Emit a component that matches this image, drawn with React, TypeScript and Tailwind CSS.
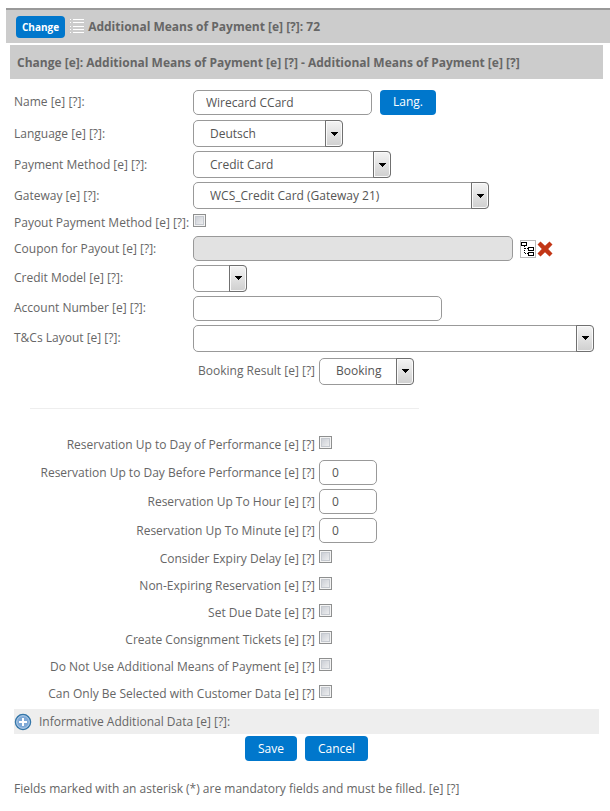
import type { ReactNode } from "react";

const box =
  "h-[25px] rounded-[5px] border border-[#999] bg-white px-3 text-[#555] outline-none";
const primary =
  "rounded-[4px] bg-[#0077cc] text-white hover:bg-[#0069b4]";

function Check({ id }: { id: string }) {
  return (
    <input
      id={id}
      type="checkbox"
      className="mb-1 size-[13px] shrink-0 appearance-none border border-[#8e8f8f] bg-linear-to-br from-[#c3c7cf] to-[#f6f6f6] shadow-[inset_0_0_0_1px_#f4f4f4,inset_0_0_0_2px_#c5c9cf] checked:from-[#0077cc]"
    />
  );
}

function Select({ id, value, width }: { id: string; value: string; width: string }) {
  return (
    <div className={`relative ${width}`}>
      <select
        id={id}
        defaultValue={value}
        className="block h-[27px] w-full appearance-none rounded-[5px] border border-[#999] bg-white pr-5 pl-4 text-[#555] outline-none"
      >
        <option value={value}>{value}</option>
      </select>
      <span
        aria-hidden="true"
        className="pointer-events-none absolute inset-y-0 right-0 flex w-[18px] items-center justify-center rounded-r-[4px] border border-[#707070] bg-linear-to-b from-[#f4f4f4] to-[#cfcfcf] shadow-[inset_0_0_0_1px_#fafafa]"
      >
        <svg width="7" height="4" viewBox="0 0 7 4" shapeRendering="crispEdges">
          <path d="M0 0h7v1H6v1H5v1H4v1H3V3H2V2H1V1H0z" fill="#000" />
        </svg>
      </span>
    </div>
  );
}

function Row({
  id,
  label,
  height = "h-[30px]",
  children,
}: {
  id: string;
  label: string;
  height?: string;
  children: ReactNode;
}) {
  return (
    <div className={`flex items-center ${height}`}>
      <label htmlFor={id} className="w-[179px] shrink-0 whitespace-nowrap">
        {label} [e] [?]:
      </label>
      {children}
    </div>
  );
}

function OptionRow({
  id,
  label,
  height = "h-[27px]",
  children,
}: {
  id: string;
  label: string;
  height?: string;
  children: ReactNode;
}) {
  return (
    <div className={`flex items-center gap-1 ${height}`}>
      <label htmlFor={id} className="w-[301px] shrink-0 text-right whitespace-nowrap">
        {label} [e] [?]
      </label>
      {children}
    </div>
  );
}

function ListIcon() {
  return (
    <svg width="14" height="15" viewBox="0 0 14 15" shapeRendering="crispEdges" aria-hidden="true">
      <path
        d="M0 0h1v1H0zM3 0h11v1H3zM0 3h1v1H0zM3 3h11v1H3zM0 7h1v1H0zM3 7h11v1H3zM0 10h1v1H0zM3 10h11v1H3zM0 13h1v1H0zM3 13h11v1H3z"
        fill="#fff"
      />
    </svg>
  );
}

function TreeIcon() {
  return (
    <svg width="16" height="18" viewBox="0 0 16 18" shapeRendering="crispEdges" aria-hidden="true">
      <rect x=".5" y=".5" width="15" height="17" fill="#fff" stroke="#bbb" />
      <g fill="none" stroke="#000">
        <rect x="1.5" y="2.5" width="5" height="3" />
        <rect x="8.5" y="7.5" width="5" height="3" />
        <rect x="8.5" y="12.5" width="5" height="3" />
        <path d="M4.5 6v8" strokeDasharray="1 1" />
        <path d="M5 8.5h3M5 13.5h3" strokeDasharray="1 1" />
      </g>
    </svg>
  );
}

function CrossIcon() {
  return (
    <svg width="16" height="16" viewBox="0 0 16 16" aria-hidden="true">
      <path
        d="M3.5 .5 8 4.8 12.5 .5 15.5 3.5 11.2 8 15.5 12.5 12.5 15.5 8 11.2 3.5 15.5 .5 12.5 4.8 8 .5 3.5z"
        fill="#c23616"
      />
    </svg>
  );
}

function PlusIcon() {
  return (
    <svg width="18" height="18" viewBox="0 0 18 18" aria-hidden="true">
      <circle cx="9" cy="9" r="7.5" fill="#7fa9d6" stroke="#3576a8" strokeWidth="1.5" />
      <circle cx="9" cy="9" r="6.3" fill="none" stroke="#b4cfea" />
      <path d="M9 5v8M5 9h8" stroke="#fff" strokeWidth="2" />
    </svg>
  );
}

const numberFields = [
  ["day-before", "Reservation Up to Day Before Performance"],
  ["hour", "Reservation Up To Hour"],
  ["minute", "Reservation Up To Minute"],
];

const flags = [
  ["expiry-delay", "Consider Expiry Delay"],
  ["non-expiring", "Non-Expiring Reservation"],
  ["due-date", "Set Due Date"],
  ["consignment", "Create Consignment Tickets"],
  ["not-use", "Do Not Use Additional Means of Payment"],
  ["customer-data", "Can Only Be Selected with Customer Data"],
];

export default function App() {
  return (
    <main className="bg-white pt-2 pb-3 font-['Open_Sans','Noto_Sans',sans-serif] text-[12px] leading-[18px] text-[#666]">
      <header className="ml-1.5 flex h-[35px] items-center border-t-2 border-[#999] bg-[#ccc] pl-2.5 font-bold">
        <button type="button" className={`${primary} h-[22px] px-1.5 text-[10px]`}>
          Change
        </button>
        <span className="mr-1 ml-[5px]">
          <ListIcon />
        </span>
        <h1>Additional Means of Payment [e] [?]: 72</h1>
      </header>
      <h2 className="mt-0.5 mr-[7px] ml-2.5 bg-[#ccc] pt-[9px] pb-[7px] pl-[7px] font-bold">
        Change [e]: Additional Means of Payment [e] [?] - Additional Means of Payment [e] [?]
      </h2>

      <form className="mt-[7px] mr-[11px] ml-3.5" onSubmit={(e) => e.preventDefault()}>
        <Row id="name" label="Name" height="h-8">
          <input id="name" defaultValue="Wirecard CCard" className={`${box} w-[179px]`} />
          <button type="button" className={`${primary} ml-2 h-[25px] w-14`}>
            Lang.
          </button>
        </Row>
        <Row id="language" label="Language" height="h-[31px]">
          <Select id="language" value="Deutsch" width="w-[150px]" />
        </Row>
        <Row id="method" label="Payment Method" height="h-[31px]">
          <Select id="method" value="Credit Card" width="w-[198px]" />
        </Row>
        <Row id="gateway" label="Gateway" height="h-[31px]">
          <Select id="gateway" value="WCS_Credit Card (Gateway 21)" width="w-[296px]" />
        </Row>
        <Row id="payout" label="Payout Payment Method" height="h-[23px]">
          <Check id="payout" />
        </Row>
        <Row id="coupon" label="Coupon for Payout" height="h-[29px]">
          <input id="coupon" disabled className="h-[25px] w-80 rounded-[5px] border border-[#999] bg-[#e2e2e2] px-3" />
          <button type="button" aria-label="Choose coupon" className="ml-[7px]">
            <TreeIcon />
          </button>
          <button type="button" aria-label="Remove coupon" className="ml-px">
            <CrossIcon />
          </button>
        </Row>
        <Row id="credit-model" label="Credit Model">
          <Select id="credit-model" value="" width="w-[54px]" />
        </Row>
        <Row id="account" label="Account Number">
          <input id="account" className={`${box} w-[249px]`} />
        </Row>
        <Row id="layout" label="T&Cs Layout">
          <Select id="layout" value="" width="w-[401px]" />
        </Row>
        <OptionRow id="booking" label="Booking Result" height="h-9">
          <Select id="booking" value="Booking" width="w-[95px]" />
        </OptionRow>

        <hr className="mt-[19px] mb-[22px] ml-4 w-[389px] border-[#eee]" />

        <OptionRow id="day-of" label="Reservation Up to Day of Performance">
          <Check id="day-of" />
        </OptionRow>
        {numberFields.map(([id, label]) => (
          <OptionRow key={id} id={id} label={label} height="h-[29px]">
            <input id={id} defaultValue="0" className={`${box} w-[58px]`} />
          </OptionRow>
        ))}
        {flags.map(([id, label]) => (
          <OptionRow key={id} id={id} label={label}>
            <Check id={id} />
          </OptionRow>
        ))}

        <button
          type="button"
          className="mt-0.5 flex h-[25px] w-full items-center gap-[7px] bg-[#eee] text-left"
        >
          <PlusIcon />
          Informative Additional Data [e] [?]:
        </button>

        <div className="mt-0.5 flex justify-center gap-2">
          <button type="submit" className={`${primary} h-[25px] px-[13px]`}>
            Save
          </button>
          <button type="button" className={`${primary} h-[25px] px-[13px]`}>
            Cancel
          </button>
        </div>
      </form>

      <p className="mt-[19px] ml-3.5">
        Fields marked with an asterisk (*) are mandatory fields and must be filled. [e] [?]
      </p>
    </main>
  );
}
